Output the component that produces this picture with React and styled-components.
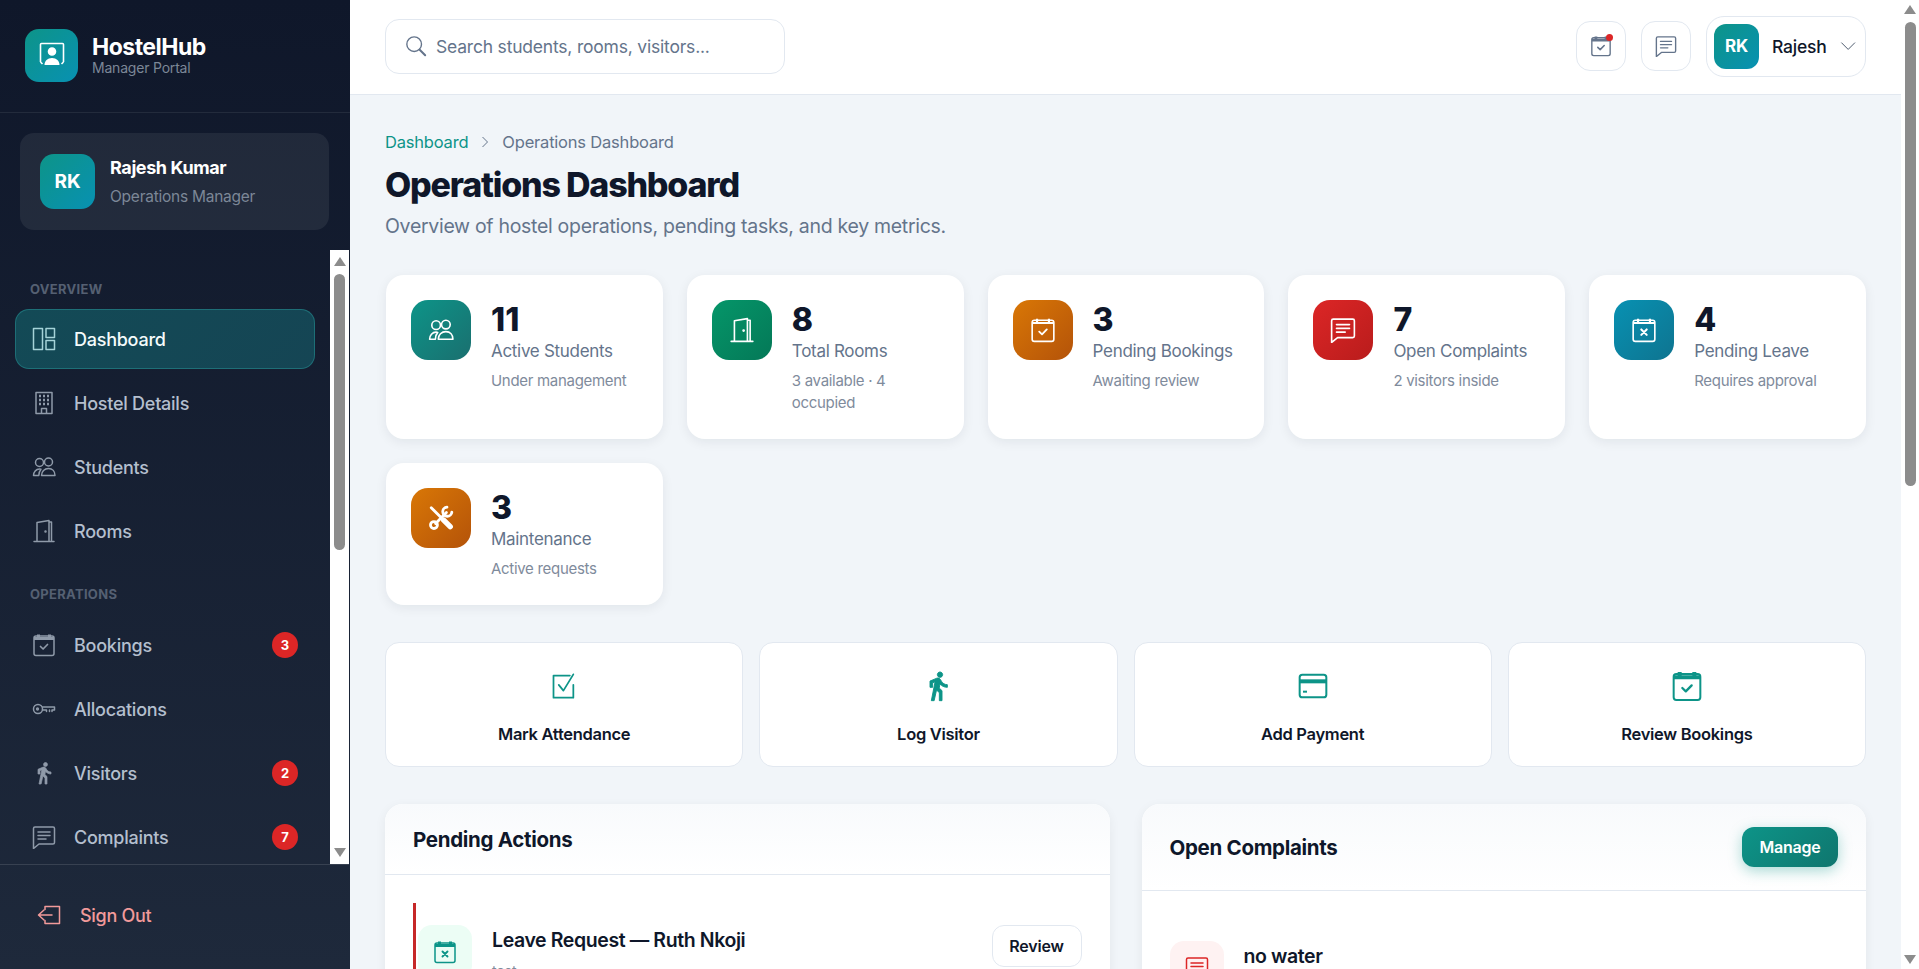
import styled, { createGlobalStyle } from 'styled-components';

const GlobalStyle = createGlobalStyle`
  * { box-sizing: border-box; }
  html, body { margin: 0; height: 100%; overflow: hidden; }
  body {
    font-family: Inter, "Noto Sans", "Liberation Sans", sans-serif;
    color: #0f172a;
    background: #f1f5f9;
  }
`;

const Shell = styled.div`
  display: flex;
  height: 100vh;
`;

const Sidebar = styled.aside`
  flex: 0 0 350px;
  display: flex;
  flex-direction: column;
  height: 100%;
  padding-right: 1px;
  background: linear-gradient(180deg, #0f172a 0%, #1e293b 100%);
`;

const Brand = styled.div`
  flex: 0 0 113px;
  display: flex;
  align-items: center;
  gap: 14px;
  padding: 0 25px 2px;
  margin-right: -1px;
  border-bottom: 1px solid rgba(255, 255, 255, 0.08);
`;

const Tile = styled.div`
  display: flex;
  align-items: center;
  justify-content: center;
  flex-shrink: 0;
  width: ${(p) => p.$size}px;
  height: ${(p) => p.$size}px;
  border-radius: ${(p) => p.$radius}px;
  color: #fff;
  background: linear-gradient(135deg, ${(p) => p.$from}, ${(p) => p.$to});
`;

const BrandName = styled.div`
  font-size: 23px;
  line-height: 26px;
  font-weight: 700;
  letter-spacing: -0.5px;
  color: #fff;
`;

const BrandSub = styled.div`
  font-size: 14px;
  line-height: 16px;
  color: #7c8797;
  letter-spacing: -0.2px;
`;

const UserCard = styled.div`
  flex: 0 0 97px;
  display: flex;
  align-items: center;
  gap: 15px;
  margin: 20px 20px 20px 20px;
  padding: 0 20px;
  border-radius: 14px;
  background: rgba(255, 255, 255, 0.07);
`;

const AvatarText = styled.span`
  font-size: ${(p) => p.$size}px;
  font-weight: 700;
  color: #fff;
`;

const UserName = styled.div`
  font-size: 18px;
  line-height: 24px;
  font-weight: 700;
  letter-spacing: -0.4px;
  color: #fff;
  margin-bottom: 6px;
`;

const UserRole = styled.div`
  font-size: 15.5px;
  line-height: 22px;
  letter-spacing: -0.25px;
  color: #7c8797;
`;

const NavArea = styled.div`
  flex: 1;
  min-height: 0;
  display: flex;
`;

const Nav = styled.nav`
  flex: 1;
  min-width: 0;
  overflow: hidden;
  padding: 29px 15px 0;
`;

const NavLabel = styled.div`
  font-size: 13px;
  line-height: 20px;
  font-weight: 700;
  letter-spacing: 0.3px;
  text-transform: uppercase;
  color: #556072;
  padding-left: 15px;
  margin: ${(p) => (p.$first ? '0 0 10px' : '23px 0 11px')};
`;

const NavItem = styled.a`
  display: flex;
  align-items: center;
  gap: 18px;
  height: 60px;
  margin-bottom: 4px;
  padding: 0 16px;
  border-radius: 14px;
  border: 1px solid ${(p) => (p.$active ? 'rgba(45, 170, 170, 0.4)' : 'transparent')};
  background: ${(p) =>
    p.$active ? 'linear-gradient(135deg, #134a56, #154554)' : 'transparent'};
  color: ${(p) => (p.$active ? '#f4fbfb' : '#b4bfce')};
  font-size: 18px;
  font-weight: 500;
  letter-spacing: -0.25px;

  svg {
    color: ${(p) => (p.$active ? '#a5d3d8' : '#8f9aa9')};
    flex-shrink: 0;
  }
`;

const NavText = styled.span`
  flex: 1;
`;

const Badge = styled.span`
  display: flex;
  align-items: center;
  justify-content: center;
  width: 26px;
  height: 26px;
  border-radius: 50%;
  background: #dc2626;
  color: #fff;
  font-size: 13px;
  font-weight: 700;
  letter-spacing: 0;
`;

const SidebarFooter = styled.div`
  flex: 0 0 105px;
  display: flex;
  align-items: center;
  gap: 19px;
  padding: 0 0 4px 37px;
  border-top: 1px solid rgba(255, 255, 255, 0.12);
  color: #f29a9a;
  font-size: 18px;
  font-weight: 500;
  letter-spacing: -0.3px;
`;

const Rail = styled.div`
  flex: 0 0 ${(p) => p.$width}px;
  display: flex;
  flex-direction: column;
  align-items: center;
  padding: ${(p) => p.$pad}px 0;
  background: #fff;
`;

const RailArrow = styled.span`
  width: 0;
  height: 0;
  border-left: 6.5px solid transparent;
  border-right: 6.5px solid transparent;
  border-${(p) => (p.$up ? 'bottom' : 'top')}: 9px solid #8c8c8c;
`;

const RailTrack = styled.div`
  flex: 1;
`;

const RailThumb = styled.div`
  width: 11px;
  height: ${(p) => p.$height}px;
  margin-top: 8px;
  border-radius: 6px;
  background: #8c8c8c;
`;

const ScrollRail = ({ width, pad, thumb }) => (
  <Rail $width={width} $pad={pad}>
    <RailArrow $up />
    <RailTrack>
      <RailThumb $height={thumb} />
    </RailTrack>
    <RailArrow />
  </Rail>
);

const Main = styled.main`
  flex: 1;
  min-width: 0;
  height: 100%;
  overflow: hidden;
  background: #f1f5f9;
`;

const Topbar = styled.header`
  display: flex;
  align-items: center;
  justify-content: space-between;
  height: 95px;
  padding: 0 35px 2px;
  background: #fff;
  border-bottom: 1px solid #e2e8f0;
`;

const Search = styled.div`
  display: flex;
  align-items: center;
  gap: 9px;
  width: 400px;
  height: 55px;
  padding: 0 19px;
  background: #fff;
  border: 1px solid #e2e8f0;
  border-radius: 14px;
  color: #64748b;
  font-size: 17.5px;
  letter-spacing: -0.2px;
`;

const TopActions = styled.div`
  display: flex;
  align-items: center;
  gap: 15px;
`;

const IconButton = styled.button`
  position: relative;
  display: flex;
  align-items: center;
  justify-content: center;
  width: 50px;
  height: 50px;
  padding: 0;
  background: #fff;
  border: 1px solid #e2e8f0;
  border-radius: 14px;
  color: #64748b;
`;

const Dot = styled.span`
  position: absolute;
  top: 12px;
  right: 12px;
  width: 7px;
  height: 7px;
  border-radius: 50%;
  background: #dc2626;
`;

const UserPill = styled.div`
  display: flex;
  align-items: center;
  gap: 13px;
  width: 160px;
  height: 61px;
  padding: 0 9px 0 7px;
  border: 1px solid #e2e8f0;
  border-radius: 18px;
  font-size: 17.5px;
  font-weight: 500;
  letter-spacing: -0.2px;

  svg {
    color: #475569;
  }
`;

const Content = styled.div`
  padding: 34px 35px 0;
`;

const Crumbs = styled.div`
  display: flex;
  align-items: center;
  height: 26px;
  margin-bottom: 8px;
  font-size: 16.5px;
  color: #64748b;
  letter-spacing: -0.2px;

  svg {
    margin: 0 11px;
  }
`;

const CrumbLink = styled.span`
  color: #0d9488;
`;

const Title = styled.h1`
  margin: 0;
  font-size: 34px;
  line-height: 44px;
  font-weight: 800;
  letter-spacing: -1.2px;
`;

const Subtitle = styled.p`
  margin: 4px 0 0;
  font-size: 19.5px;
  line-height: 30px;
  color: #64748b;
  letter-spacing: -0.3px;
`;

const StatGrid = styled.div`
  display: grid;
  grid-template-columns: repeat(5, 1fr);
  gap: 24px;
  margin: 34px 0 0 1px;
`;

const StatCard = styled.div`
  display: flex;
  gap: 20px;
  padding: 25px;
  background: #fff;
  border-radius: 18px;
  box-shadow: 0 3px 12px rgba(15, 23, 42, 0.07);
`;

const StatValue = styled.div`
  padding-top: 1px;
  font-size: 32px;
  line-height: 37px;
  font-weight: 800;
`;

const StatLabel = styled.div`
  font-size: 17px;
  line-height: 26px;
  color: #64748b;
  letter-spacing: -0.3px;
`;

const StatNote = styled.div`
  margin-top: 6px;
  font-size: 15px;
  line-height: 22px;
  color: #7f8b9c;
  letter-spacing: -0.3px;
`;

const QuickGrid = styled.div`
  display: grid;
  grid-template-columns: repeat(4, 1fr);
  gap: 16px;
  margin-top: 37px;
`;

const QuickCard = styled.div`
  display: flex;
  flex-direction: column;
  align-items: center;
  height: 125px;
  padding-top: 26px;
  background: #fff;
  border: 1px solid #e2e8f0;
  border-radius: 14px;
  color: #0d9488;
`;

const QuickIcon = styled.div`
  display: flex;
  align-items: center;
  justify-content: center;
  height: 34px;
`;

const QuickLabel = styled.div`
  margin-top: 19px;
  font-size: 16.5px;
  line-height: 24px;
  font-weight: 600;
  letter-spacing: -0.3px;
  color: #0f172a;
`;

const Panels = styled.div`
  display: grid;
  grid-template-columns: 1fr 1fr;
  gap: 32px;
  align-items: start;
  margin-top: 37px;
`;

const Panel = styled.section`
  background: #fff;
  border-radius: 18px;
  box-shadow: 0 3px 12px rgba(15, 23, 42, 0.06);
  overflow: hidden;
`;

const PanelHead = styled.div`
  display: flex;
  align-items: center;
  justify-content: space-between;
  padding: 23px 28px;
  background: linear-gradient(180deg, #f8fafc, #fff);
  border-bottom: 1px solid #e2e8f0;
`;

const PanelTitle = styled.h2`
  margin: 1px 0 -1px;
  font-size: 20.5px;
  line-height: 24px;
  font-weight: 700;
  letter-spacing: -0.3px;
`;

const ManageButton = styled.button`
  width: 96px;
  height: 40px;
  border: 0;
  border-radius: 12px;
  background: linear-gradient(135deg, #0d9488, #0f766e);
  box-shadow: 0 4px 14px rgba(13, 148, 136, 0.35);
  color: #fff;
  font: 600 16px Inter, sans-serif;
  letter-spacing: -0.2px;
`;

const PanelBody = styled.div`
  padding: 28px;
`;

const Row = styled.div`
  display: flex;
  align-items: flex-start;
  gap: 20px;
  padding: ${(p) => (p.$flagged ? '22px 0 24px 2px' : '22px 0')};
  border-left: ${(p) => (p.$flagged ? '3px solid #c62828' : '0')};
`;

const RowTile = styled.div`
  display: flex;
  align-items: center;
  justify-content: center;
  flex-shrink: 0;
  width: 54px;
  height: 54px;
  border-radius: 14px;
  background: ${(p) => p.$bg};
  color: ${(p) => p.$color};
`;

const RowText = styled.div`
  flex: 1;
  padding-top: 3px;
`;

const RowTitle = styled.div`
  font-size: 19.5px;
  line-height: 24px;
  font-weight: 600;
  letter-spacing: -0.4px;
`;

const RowNote = styled.div`
  margin-top: 8px;
  font-size: 14px;
  line-height: 22px;
  color: #7f8b9c;
`;

const ReviewButton = styled.button`
  width: 90px;
  height: 42px;
  background: #fff;
  border: 1px solid #e2e8f0;
  border-radius: 12px;
  color: #0f172a;
  font: 600 16px Inter, sans-serif;
  letter-spacing: -0.2px;
`;

const Icon = ({ size = 24, width = 1.5, children }) => (
  <svg
    width={size}
    height={size}
    viewBox='0 0 24 24'
    fill='none'
    stroke='currentColor'
    strokeWidth={width}
    strokeLinecap='round'
    strokeLinejoin='round'
  >
    {children}
  </svg>
);

const LayoutIcon = (p) => (
  <Icon {...p}>
    <rect x='1.5' y='1.5' width='9' height='21' />
    <rect x='14' y='1.5' width='8.5' height='9' />
    <rect x='14' y='13.5' width='8.5' height='9' />
  </Icon>
);

const BuildingIcon = (p) => (
  <Icon {...p}>
    <path d='M4 1.5h16v21H4zM9.5 22.5v-5h5v5' />
    <path
      d='M7 5h2M11 5h2M15 5h2M7 9h2M11 9h2M15 9h2M7 13h2M11 13h2M15 13h2'
      strokeWidth='2.4'
      strokeLinecap='butt'
    />
  </Icon>
);

const PeopleIcon = (p) => (
  <Icon {...p}>
    <circle cx='7.5' cy='7.5' r='4' />
    <circle cx='16.5' cy='7' r='4' />
    <path d='M1.5 20.5c0-3.5 2.5-6.5 6-6.5 .5 0 1 0 1.5.2-1.4 1.6-2.2 3.8-2.2 6.3z' />
    <path d='M9.5 20.5c0-4 3-7 7-7s6.5 3 6.5 7z' />
  </Icon>
);

const DoorIcon = (p) => (
  <Icon {...p}>
    <path d='M2 22.5h20M5 22.5V3.5L17 1.5v21M17 3h2.5v19.5' />
    <circle cx='13.5' cy='12.5' r='.5' fill='currentColor' />
  </Icon>
);

const CalendarIcon = ({ mark = 'check', heavy, ...p }) => (
  <Icon {...p}>
    <rect x='2' y='3' width='20' height='19.5' rx='2' />
    <path d='M2 5.5h20M6.5 1.5v3M17.5 1.5v3' strokeWidth={heavy ? 3 : 2} strokeLinecap='butt' />
    {mark === 'check' ? (
      <path d='M8.5 13.5l2.6 2.5 4.4-4.5' strokeWidth='1.7' />
    ) : (
      <path d='M9.5 11.5l5 5M14.5 11.5l-5 5' strokeWidth='1.9' />
    )}
  </Icon>
);

const KeyIcon = (p) => (
  <Icon {...p}>
    <circle cx='6' cy='12' r='4.5' />
    <circle cx='5.5' cy='12' r='.9' />
    <path d='M10.5 10h12v3h-2.5v1.5M17.5 13v1.5M14.5 13v1.5M14.5 13h-4' />
  </Icon>
);

const WalkIcon = ({ size = 24 }) => (
  <svg width={size} height={size} viewBox='0 0 24 24' fill='currentColor' stroke='currentColor' strokeWidth='.7'>
    <path d='M13.5 5.5c1.1 0 2-.9 2-2s-.9-2-2-2-2 .9-2 2 .9 2 2 2zM9.8 8.9 7 23h2.1l1.8-8 2.1 2v6h2v-7.5l-2.1-2 .6-3C14.8 12 16.8 13 19 13v-2c-1.9 0-3.5-1-4.3-2.4l-1-1.6c-.4-.6-1-1-1.7-1-.3 0-.5.1-.8.1L6 8.3V13h2V9.6l1.8-.7z' />
  </svg>
);

const ChatIcon = (p) => (
  <Icon {...p}>
    <path d='M1.5 3.5a1.5 1.5 0 0 1 1.5-1.5h18a1.5 1.5 0 0 1 1.5 1.5v14a1.5 1.5 0 0 1-1.5 1.5H7l-5.5 4.5z' />
    <path d='M6 7h12M6 10.5h12M6 14h8' />
  </Icon>
);

const ExitIcon = (p) => (
  <Icon {...p}>
    <path d='M8 6.5V3.5h14.5v17H8v-3' />
    <path d='M15 12H2M7 7l-5.5 5L7 17' />
  </Icon>
);

const SearchIcon = () => (
  <Icon size={22}>
    <circle cx='10' cy='10' r='8' />
    <path d='M16 16l6 6' strokeWidth='2.2' />
  </Icon>
);

const Chevron = ({ size = 12, dir = 'right' }) => (
  <svg
    width={size}
    height={size}
    viewBox='0 0 12 12'
    fill='none'
    stroke='currentColor'
    strokeWidth={dir === 'down' ? 0.7 : 1}
    style={{ transform: dir === 'down' ? 'rotate(90deg)' : undefined }}
  >
    <path d='M3.5 1l5 5-5 5' />
  </svg>
);

const ToolsIcon = (p) => (
  <Icon {...p} width={2.6}>
    <path d='M3 2.5l16 16' />
    <path d='M14.5 14l6 6' strokeWidth='5' />
    <path d='M7 17L17 7' />
    <path d='M22 6.5a4.2 4.2 0 1 1-4.5-4.5' />
    <circle cx='5.5' cy='18.5' r='3.2' />
  </Icon>
);

const ChecklistIcon = (p) => (
  <Icon {...p}>
    <path d='M17 3H3v19h17V11' />
    <path d='M7.5 11l4 5L20 2' />
  </Icon>
);

const CardIcon = (p) => (
  <Icon {...p}>
    <rect x='2' y='3.5' width='20' height='17' rx='2' />
    <path d='M2 8.5h20' strokeWidth='3' strokeLinecap='butt' />
    <path d='M6 15.5v1.5' strokeWidth='3' strokeLinecap='butt' />
  </Icon>
);

const LogoIcon = () => (
  <svg width='28' height='28' viewBox='0 0 28 28' fill='none' stroke='#fff' strokeWidth='1.6'>
    <path d='M2.5 21V3.5a1 1 0 0 1 1-1h21a1 1 0 0 1 1 1V21M2.5 21l2 2M25.5 21l-2 2' />
    <circle cx='14' cy='10.5' r='3.5' fill='#fff' />
    <path d='M6.5 24c0-4 3-7 7.5-7s7.5 3 7.5 7z' fill='#fff' stroke='none' />
  </svg>
);

const stats = [
  { value: 11, label: 'Active Students', note: 'Under management', from: '#0d9488', to: '#1a6f6f', icon: <PeopleIcon size={26} /> },
  { value: 8, label: 'Total Rooms', note: '3 available · 4 occupied', from: '#059669', to: '#047857', icon: <DoorIcon size={26} /> },
  { value: 3, label: 'Pending Bookings', note: 'Awaiting review', from: '#d97706', to: '#b45309', icon: <CalendarIcon size={26} /> },
  { value: 7, label: 'Open Complaints', note: '2 visitors inside', from: '#dc2626', to: '#b91c1c', icon: <ChatIcon size={26} /> },
  { value: 4, label: 'Pending Leave', note: 'Requires approval', from: '#0891b2', to: '#0e7490', icon: <CalendarIcon size={26} mark='x' /> },
  { value: 3, label: 'Maintenance', note: 'Active requests', from: '#d97706', to: '#b45309', icon: <ToolsIcon size={26} /> },
];

const quickActions = [
  { label: 'Mark Attendance', icon: <ChecklistIcon size={28} /> },
  { label: 'Log Visitor', icon: <WalkIcon size={32} /> },
  { label: 'Add Payment', icon: <CardIcon size={32} /> },
  { label: 'Review Bookings', icon: <CalendarIcon size={32} heavy /> },
];

const overviewNav = [
  { label: 'Dashboard', icon: <LayoutIcon />, active: true },
  { label: 'Hostel Details', icon: <BuildingIcon /> },
  { label: 'Students', icon: <PeopleIcon /> },
  { label: 'Rooms', icon: <DoorIcon /> },
];

const operationsNav = [
  { label: 'Bookings', icon: <CalendarIcon heavy />, badge: 3 },
  { label: 'Allocations', icon: <KeyIcon /> },
  { label: 'Visitors', icon: <WalkIcon />, badge: 2 },
  { label: 'Complaints', icon: <ChatIcon />, badge: 7 },
];

const NavGroup = ({ items }) =>
  items.map((item) => (
    <NavItem key={item.label} $active={item.active}>
      {item.icon}
      <NavText>{item.label}</NavText>
      {item.badge && <Badge>{item.badge}</Badge>}
    </NavItem>
  ));

const App = () => {
  return (
    <Shell>
      <GlobalStyle />
      <Sidebar>
        <Brand>
          <Tile $size={53} $radius={14} $from='#0d9488' $to='#0891b2'>
            <LogoIcon />
          </Tile>
          <div>
            <BrandName>HostelHub</BrandName>
            <BrandSub>Manager Portal</BrandSub>
          </div>
        </Brand>
        <UserCard>
          <Tile $size={55} $radius={14} $from='#0d9488' $to='#0891b2'>
            <AvatarText $size={19}>RK</AvatarText>
          </Tile>
          <div>
            <UserName>Rajesh Kumar</UserName>
            <UserRole>Operations Manager</UserRole>
          </div>
        </UserCard>
        <NavArea>
          <Nav>
            <NavLabel $first>Overview</NavLabel>
            <NavGroup items={overviewNav} />
            <NavLabel>Operations</NavLabel>
            <NavGroup items={operationsNav} />
          </Nav>
          <ScrollRail width={19} pad={7} thumb={276} />
        </NavArea>
        <SidebarFooter>
          <ExitIcon />
          Sign Out
        </SidebarFooter>
      </Sidebar>
      <Main>
        <Topbar>
          <Search>
            <SearchIcon />
            Search students, rooms, visitors...
          </Search>
          <TopActions>
            <IconButton>
              <CalendarIcon size={22} heavy />
              <Dot />
            </IconButton>
            <IconButton>
              <ChatIcon size={22} />
            </IconButton>
            <UserPill>
              <Tile $size={45} $radius={12} $from='#0d9488' $to='#0891b2'>
                <AvatarText $size={17}>RK</AvatarText>
              </Tile>
              Rajesh
              <Chevron size={20} dir='down' />
            </UserPill>
          </TopActions>
        </Topbar>
        <Content>
          <Crumbs>
            <CrumbLink>Dashboard</CrumbLink>
            <Chevron />
            Operations Dashboard
          </Crumbs>
          <Title>Operations Dashboard</Title>
          <Subtitle>Overview of hostel operations, pending tasks, and key metrics.</Subtitle>
          <StatGrid>
            {stats.map((stat) => (
              <StatCard key={stat.label}>
                <Tile $size={60} $radius={17} $from={stat.from} $to={stat.to}>
                  {stat.icon}
                </Tile>
                <div>
                  <StatValue>{stat.value}</StatValue>
                  <StatLabel>{stat.label}</StatLabel>
                  <StatNote>{stat.note}</StatNote>
                </div>
              </StatCard>
            ))}
          </StatGrid>
          <QuickGrid>
            {quickActions.map((action) => (
              <QuickCard key={action.label}>
                <QuickIcon>{action.icon}</QuickIcon>
                <QuickLabel>{action.label}</QuickLabel>
              </QuickCard>
            ))}
          </QuickGrid>
          <Panels>
            <Panel>
              <PanelHead>
                <PanelTitle>Pending Actions</PanelTitle>
              </PanelHead>
              <PanelBody>
                <Row $flagged>
                  <RowTile $bg='#ecfdf5' $color='#0d9488'>
                    <CalendarIcon size={24} mark='x' heavy />
                  </RowTile>
                  <RowText>
                    <RowTitle>Leave Request — Ruth Nkoji</RowTitle>
                    <RowNote>test</RowNote>
                  </RowText>
                  <ReviewButton>Review</ReviewButton>
                </Row>
              </PanelBody>
            </Panel>
            <Panel>
              <PanelHead>
                <PanelTitle>Open Complaints</PanelTitle>
                <ManageButton>Manage</ManageButton>
              </PanelHead>
              <PanelBody>
                <Row>
                  <RowTile $bg='#fef2f2' $color='#dc2626'>
                    <ChatIcon size={24} />
                  </RowTile>
                  <RowText>
                    <RowTitle>no water</RowTitle>
                  </RowText>
                </Row>
              </PanelBody>
            </Panel>
          </Panels>
        </Content>
      </Main>
      <ScrollRail width={18} pad={5} thumb={464} />
    </Shell>
  );
};

export default App;
